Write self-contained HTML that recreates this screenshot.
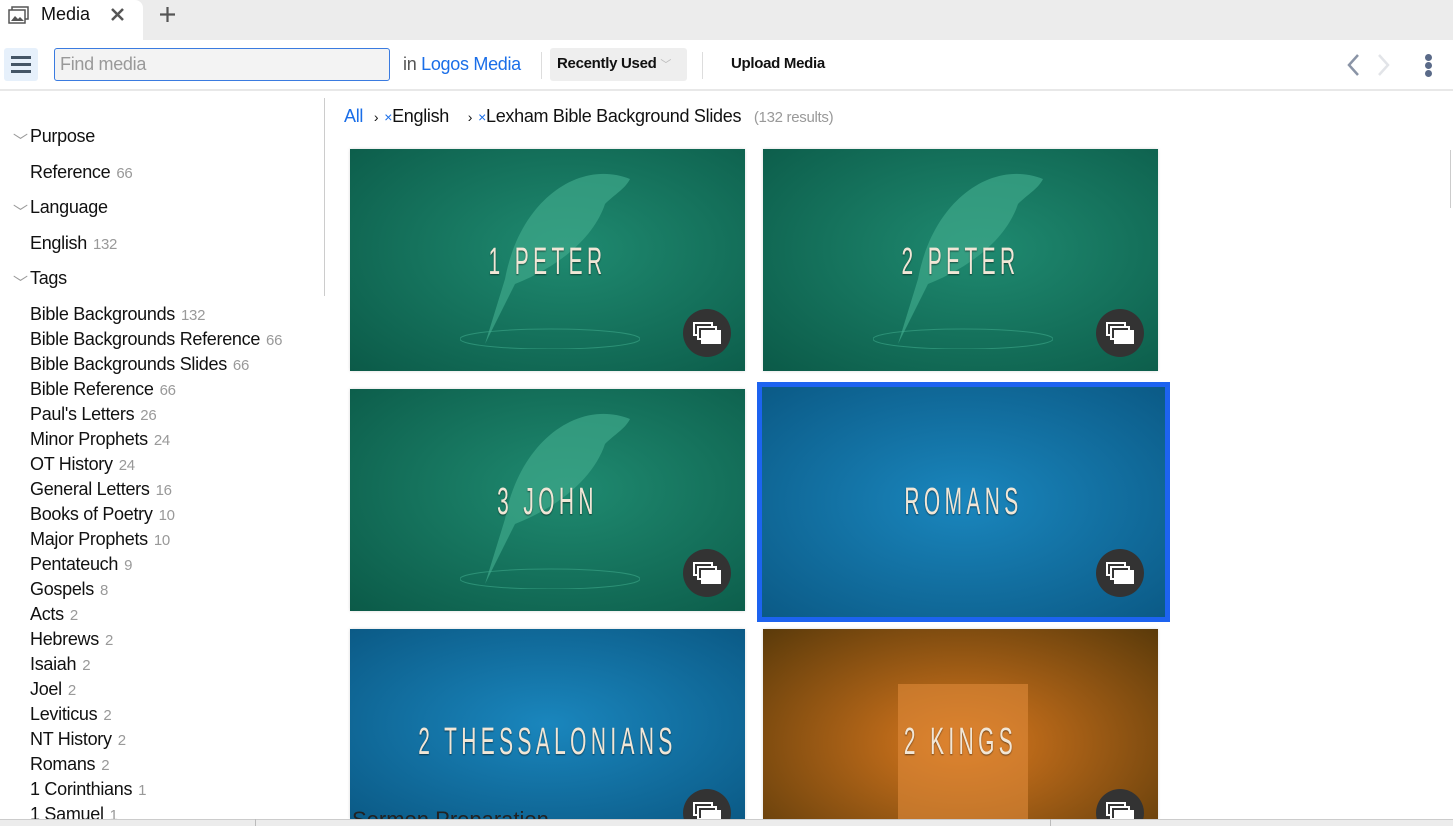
<!DOCTYPE html>
<html><head><meta charset="utf-8"><style>
*{box-sizing:border-box;margin:0;padding:0}
html,body{width:1453px;height:826px;overflow:hidden}
body{background:#fff;font-family:"Liberation Sans",sans-serif;color:#111;position:relative}
.abs{position:absolute}
.tabbar{left:0;top:0;width:1453px;height:40px;background:#ececec}
.tab{left:0;top:0;width:143px;height:40px;background:#fff;border-top-right-radius:8px}
.side div{position:absolute;left:30px;font-size:18px;white-space:nowrap;letter-spacing:-0.3px}
.side span{color:#999;font-size:15px;margin-left:6px}
.chev{position:absolute;left:7px;color:#888;font-size:12px}
.th{position:absolute;width:395px;height:222px;overflow:hidden;box-shadow:0 0 3px rgba(0,0,0,.15)}
.th .t{position:absolute;left:-100px;right:-100px;top:94px;text-align:center;font-family:"Liberation Sans Narrow","Liberation Sans",sans-serif;font-size:38px;line-height:38px;letter-spacing:8px;color:#f1e6d6;text-shadow:0 1px 2px rgba(0,0,0,.5);transform:scaleX(0.55);white-space:nowrap}
.bd{position:absolute;width:48px;height:48px;border-radius:50%;background:#333}
.bd i{position:absolute;width:20px;height:14px;border:2px solid #fff;background:#333}
.green{background:radial-gradient(ellipse at 55% 45%,#1f8a70,#0b5a48)}
.blue{background:radial-gradient(ellipse at 50% 50%,#1a86bd,#0b5a86)}
.orange{background:radial-gradient(ellipse at 50% 60%,#d9781e,#5a3a0a)}
.feather{position:absolute;left:110px;top:10px;width:180px;height:190px}
</style></head><body>
<div class="abs tabbar"></div>
<div class="abs tab"></div>
<svg class="abs" style="left:8px;top:6px" width="22" height="18" viewBox="0 0 22 18"><rect x="4" y="1" width="16" height="12" fill="none" stroke="#555" stroke-width="1.5"/><rect x="1" y="4" width="16" height="13" fill="#fff" stroke="#555" stroke-width="1.5"/><path d="M3 15l4-5 3 3 2-2 4 4z" fill="#555"/></svg>
<div class="abs" style="left:41px;top:4px;font-size:18px">Media</div>
<svg class="abs" style="left:110px;top:7px" width="15" height="15"><path d="M2 2l11 11M13 2L2 13" stroke="#555" stroke-width="2.5"/></svg>
<svg class="abs" style="left:159px;top:6px" width="17" height="17"><path d="M8.5 1v15M1 8.5h15" stroke="#555" stroke-width="2.2"/></svg>
<div class="abs" style="left:0;top:40px;width:1453px;height:51px;border-bottom:2px solid #e8e8e8"></div>
<div class="abs" style="left:4px;top:48px;width:34px;height:33px;background:#e6f0fb;border-radius:3px"></div>
<div class="abs" style="left:11px;top:56px;width:20px;height:3px;background:#456;box-shadow:0 7px 0 #456,0 14px 0 #456"></div>
<div class="abs" style="left:54px;top:48px;width:336px;height:33px;border:1.5px solid #3a7be0;border-radius:3px;background:#f3f3f3;font-size:18px;color:#999;padding:5px 5px;letter-spacing:-0.3px">Find media</div>
<div class="abs" style="left:403px;top:54px;font-size:18px;color:#555;letter-spacing:-0.3px">in <span style="color:#1a6ee8">Logos Media</span></div>
<div class="abs" style="left:541px;top:52px;width:1px;height:27px;background:#ddd"></div>
<div class="abs" style="left:550px;top:48px;width:137px;height:33px;background:#eee;border-radius:3px;font-size:15px;font-weight:bold;padding:7px 7px;letter-spacing:-0.3px">Recently Used <span style="color:#bbb;font-weight:normal;font-size:11px">﹀</span></div>
<div class="abs" style="left:702px;top:52px;width:1px;height:27px;background:#ddd"></div>
<div class="abs" style="left:731px;top:55px;font-size:15px;font-weight:bold;letter-spacing:-0.3px">Upload Media</div>
<svg class="abs" style="left:1340px;top:50px" width="60" height="30"><path d="M18 5l-9 10 9 10" fill="none" stroke="#8a94a6" stroke-width="2.5"/><path d="M39 5l9 10-9 10" fill="none" stroke="#e2e4e8" stroke-width="2.5"/></svg>
<div class="abs" style="left:1425px;top:54px;width:7px;height:7px;border-radius:50%;background:#5a6a88;box-shadow:0 8px 0 #5a6a88,0 16px 0 #5a6a88"></div>
<div class="abs" style="left:324px;top:98px;width:1px;height:198px;background:#ccc"></div>
<div class="abs" style="left:1450px;top:150px;width:1px;height:58px;background:#ccc"></div>
<div class="side">
<span class="chev" style="top:130px">﹀</span><div style="top:126px">Purpose</div>
<div style="top:162px">Reference<span>66</span></div>
<span class="chev" style="top:201px">﹀</span><div style="top:197px">Language</div>
<div style="top:233px">English<span>132</span></div>
<span class="chev" style="top:272px">﹀</span><div style="top:268px">Tags</div>
<div style="top:304px">Bible Backgrounds<span>132</span></div>
<div style="top:329px">Bible Backgrounds Reference<span>66</span></div>
<div style="top:354px">Bible Backgrounds Slides<span>66</span></div>
<div style="top:379px">Bible Reference<span>66</span></div>
<div style="top:404px">Paul's Letters<span>26</span></div>
<div style="top:429px">Minor Prophets<span>24</span></div>
<div style="top:454px">OT History<span>24</span></div>
<div style="top:479px">General Letters<span>16</span></div>
<div style="top:504px">Books of Poetry<span>10</span></div>
<div style="top:529px">Major Prophets<span>10</span></div>
<div style="top:554px">Pentateuch<span>9</span></div>
<div style="top:579px">Gospels<span>8</span></div>
<div style="top:604px">Acts<span>2</span></div>
<div style="top:629px">Hebrews<span>2</span></div>
<div style="top:654px">Isaiah<span>2</span></div>
<div style="top:679px">Joel<span>2</span></div>
<div style="top:704px">Leviticus<span>2</span></div>
<div style="top:729px">NT History<span>2</span></div>
<div style="top:754px">Romans<span>2</span></div>
<div style="top:779px">1 Corinthians<span>1</span></div>
<div style="top:804px">1 Samuel<span>1</span></div>
</div>
<div class="abs" style="left:344px;top:106px;font-size:18px;white-space:nowrap;letter-spacing:-0.3px"><span style="color:#1a6ee8">All</span> <span style="font-size:14px;margin:0 6px">›</span><span style="color:#1a6ee8;font-size:14px">×</span>English <span style="font-size:14px;margin:0 6px 0 14px">›</span><span style="color:#1a6ee8;font-size:14px">×</span>Lexham Bible Background Slides <span style="color:#999;font-size:15px;margin-left:8px">(132 results)</span></div>

<div class="th green" style="left:350px;top:149px"><svg class="feather" viewBox="0 0 180 190"><path d="M170 20C120 0 60 40 45 120l-20 65 30-60c50-20 80-50 90-80 10-10 20-15 25-25z" fill="#3ea88a" opacity=".7"/><ellipse cx="90" cy="180" rx="90" ry="10" fill="none" stroke="#3ea88a" opacity=".6"/></svg><div class="t">1 PETER</div><div class="bd" style="left:333px;top:160px"><i style="left:10px;top:13px"></i><i style="left:14px;top:17px"></i><i style="left:18px;top:21px;background:#fff"></i></div></div>
<div class="th green" style="left:763px;top:149px"><svg class="feather" viewBox="0 0 180 190"><path d="M170 20C120 0 60 40 45 120l-20 65 30-60c50-20 80-50 90-80 10-10 20-15 25-25z" fill="#3ea88a" opacity=".7"/><ellipse cx="90" cy="180" rx="90" ry="10" fill="none" stroke="#3ea88a" opacity=".6"/></svg><div class="t">2 PETER</div><div class="bd" style="left:333px;top:160px"><i style="left:10px;top:13px"></i><i style="left:14px;top:17px"></i><i style="left:18px;top:21px;background:#fff"></i></div></div>
<div class="th green" style="left:350px;top:389px"><svg class="feather" viewBox="0 0 180 190"><path d="M170 20C120 0 60 40 45 120l-20 65 30-60c50-20 80-50 90-80 10-10 20-15 25-25z" fill="#3ea88a" opacity=".7"/><ellipse cx="90" cy="180" rx="90" ry="10" fill="none" stroke="#3ea88a" opacity=".6"/></svg><div class="t">3 JOHN</div><div class="bd" style="left:333px;top:160px"><i style="left:10px;top:13px"></i><i style="left:14px;top:17px"></i><i style="left:18px;top:21px;background:#fff"></i></div></div>
<div class="abs" style="left:757px;top:382px;width:413px;height:240px;border:5px solid #1d63f0"></div>
<div class="th blue" style="left:762px;top:387px;width:403px;height:230px;box-shadow:none"><div class="t" style="top:96px">ROMANS</div><div class="bd" style="left:334px;top:162px"><i style="left:10px;top:13px"></i><i style="left:14px;top:17px"></i><i style="left:18px;top:21px;background:#fff"></i></div></div>
<div class="th blue" style="left:350px;top:629px;height:190px"><div class="t">2 THESSALONIANS</div><div class="bd" style="left:333px;top:160px"><i style="left:10px;top:13px"></i><i style="left:14px;top:17px"></i><i style="left:18px;top:21px;background:#fff"></i></div></div>
<div class="th orange" style="left:763px;top:629px;height:190px"><div style="position:absolute;left:135px;top:55px;width:130px;height:140px;background:#e08a3a;opacity:.6"></div><div class="t">2 KINGS</div><div class="bd" style="left:333px;top:160px"><i style="left:10px;top:13px"></i><i style="left:14px;top:17px"></i><i style="left:18px;top:21px;background:#fff"></i></div></div>
<div class="abs" style="left:352px;top:808px;font-size:22px;height:11px;overflow:hidden;line-height:24px;color:#222;white-space:nowrap">Sermon Preparation</div>
<div class="abs" style="left:0;top:819px;width:1453px;height:7px;background:#ececec;border-top:1px solid #ccc"></div>
<div class="abs" style="left:255px;top:819px;width:1px;height:7px;background:#bbb"></div>
<div class="abs" style="left:1050px;top:819px;width:1px;height:7px;background:#bbb"></div>
</body></html>
